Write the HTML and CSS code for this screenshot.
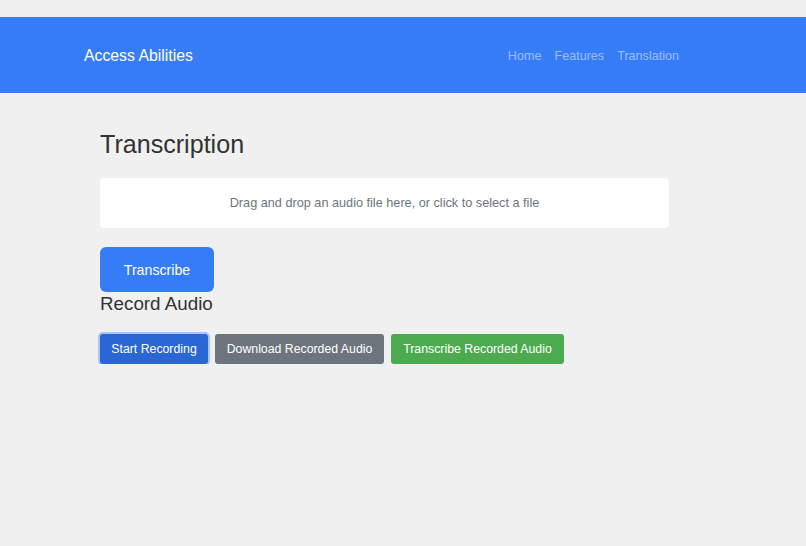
FILE: index.html
```html
<!DOCTYPE html>
<html>
<head>
<meta charset="utf-8">
<link rel="stylesheet" href="styles.css">
</head>
<body>
<header class="navbar">
  <div class="nav-inner">
    <span class="brand">Access Abilities</span>
    <nav class="links">
      <a class="link">Home</a>
      <a class="link">Features</a>
      <a class="link">Translation</a>
    </nav>
  </div>
</header>
<main class="content">
  <h1 class="title">Transcription</h1>
  <div class="dropzone">Drag and drop an audio file here, or click to select a file</div>
  <button class="btn-lg">Transcribe</button>
  <h2 class="subtitle">Record Audio</h2>
  <div class="row">
    <button class="btn btn-blue">Start Recording</button>
    <button class="btn btn-gray">Download Recorded Audio</button>
    <button class="btn btn-green">Transcribe Recorded Audio</button>
  </div>
</main>
</body>
</html>
```
FILE: styles.css
```css
html, body {
  margin: 0;
  padding: 0;
  background: #f0f0f0;
  font-family: "Liberation Sans", Arial, sans-serif;
  color: #333;
}
body {
  padding-top: 17px;
}
.navbar {
  background: #377cf7;
  height: 76px;
}
.nav-inner {
  width: 595px;
  margin-left: 84px;
  height: 100%;
  padding-top: 2px;
  box-sizing: border-box;
  display: flex;
  align-items: center;
  justify-content: space-between;
}
.brand {
  color: #fff;
  font-size: 15.8px;
}
.links {
  display: flex;
  gap: 13px;
}
.link {
  color: rgba(255, 255, 255, 0.5);
  font-size: 12.6px;
}
.content {
  margin-left: 100px;
  width: 569px;
  padding-top: 28px;
}
.title {
  font-size: 25.1px;
  font-weight: normal;
  margin: 0 0 11px 0;
  line-height: 46px;
}
.dropzone {
  background: #fff;
  border-radius: 4px;
  height: 50px;
  display: flex;
  align-items: center;
  justify-content: center;
  color: #6c757d;
  font-size: 12.7px;
}
.btn-lg {
  display: block;
  margin-top: 19px;
  width: 114px;
  height: 45px;
  border: none;
  border-radius: 6px;
  background: #377cf7;
  color: #fff;
  font-family: inherit;
  font-size: 14.2px;
  padding: 0;
}
.subtitle {
  font-size: 18.8px;
  font-weight: normal;
  margin: 0;
  line-height: 24px;
}
.row {
  display: flex;
  gap: 7px;
  margin-top: 18px;
}
.btn {
  height: 30px;
  border: none;
  border-radius: 3px;
  color: #fff;
  font-family: inherit;
  font-size: 12.3px;
  padding: 0;
  white-space: nowrap;
}
.btn-blue {
  background: #2a66d4;
  width: 108px;
  box-shadow: 0 0 0 2px #a9c6f5;
}
.btn-gray {
  background: #6c757d;
  width: 169px;
}
.btn-green {
  background: #4caa4f;
  width: 173px;
}
```
